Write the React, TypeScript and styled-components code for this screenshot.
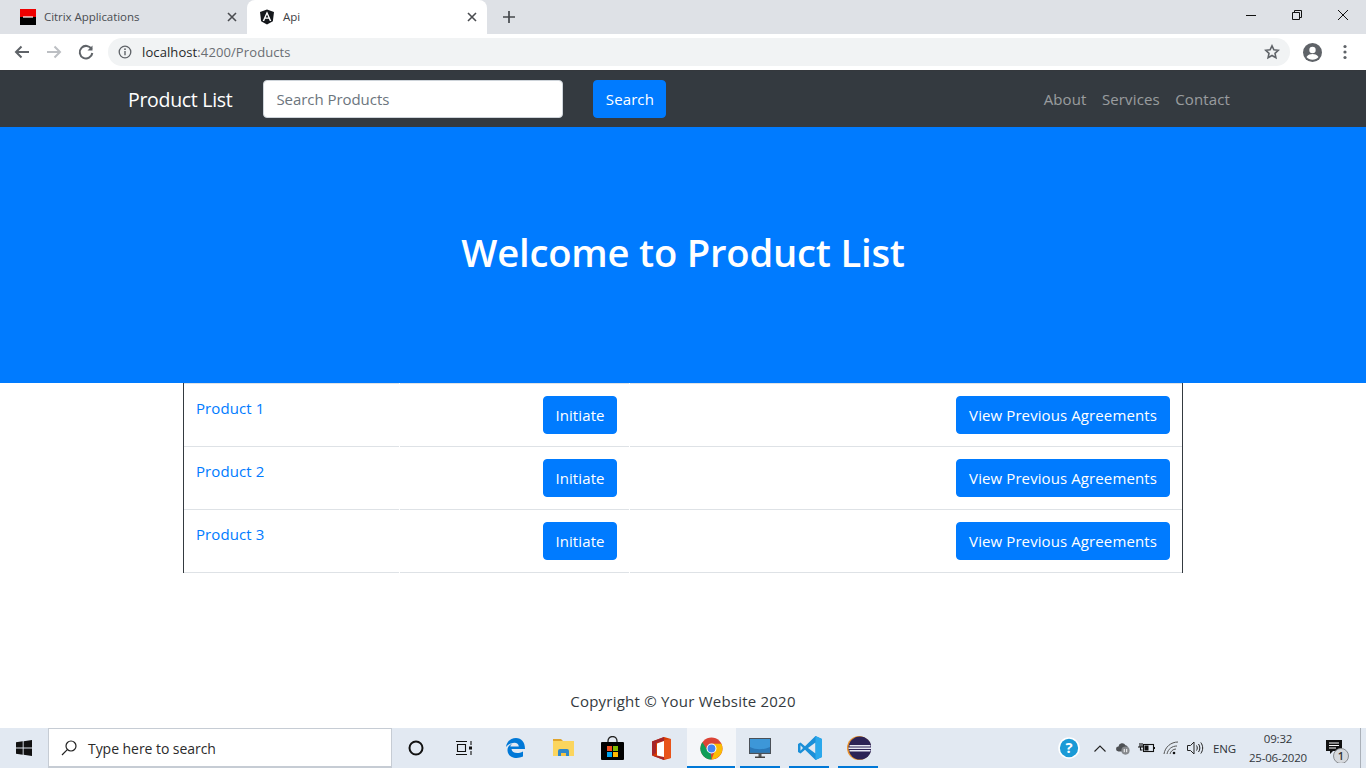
import React from "react";
import styled, { createGlobalStyle } from "styled-components";

const Global = createGlobalStyle`
  html, body { margin: 0; padding: 0; background: #fff; overflow: hidden; }
  body { font-family: "Open Sans", "Noto Sans", "Liberation Sans", sans-serif; }
  * { box-sizing: border-box; }
`;

const Page = styled.div`
  width: 1366px;
  height: 768px;
  display: flex;
  flex-direction: column;
  overflow: hidden;
`;

/* ---------- browser chrome ---------- */
const TabStrip = styled.div`
  height: 34px;
  background: #dee1e6;
  display: flex;
  align-items: stretch;
  flex: none;
`;
const Tab = styled.div<{ $active?: boolean; $width: number }>`
  position: relative;
  width: ${(p) => p.$width}px;
  display: flex;
  align-items: center;
  padding: 0 8px 1px ${(p) => (p.$active ? 12 : 20)}px;
  border-radius: 8px 8px 0 0;
  background: ${(p) => (p.$active ? "#fff" : "transparent")};
  font-size: 11.5px;
  letter-spacing: -0.05px;
  color: ${(p) => (p.$active ? "#3c4043" : "#4a4d52")};
`;
const TabTitle = styled.span`
  flex: 1;
  margin-left: 8px;
`;
const TabClose = styled.svg`
  width: 10px;
  height: 10px;
  margin-right: 2px;
  stroke: #4a4c50;
  stroke-width: 1.6;
  fill: none;
`;
const NewTab = styled.svg`
  width: 14px;
  height: 14px;
  margin: 10px 0 0 15px;
  stroke: #45484c;
  stroke-width: 1.7;
  fill: none;
`;
const WindowControls = styled.div`
  margin-left: auto;
  display: flex;
  height: 34px;
`;
const WinButton = styled.div`
  width: 46px;
  height: 34px;
  display: flex;
  align-items: center;
  justify-content: center;
  svg { stroke: #111; stroke-width: 1; fill: none; width: 12px; height: 12px; margin-bottom: 5px; }
`;
const Toolbar = styled.div`
  height: 37px;
  background: #fff;
  display: flex;
  align-items: center;
  border-bottom: 1px solid #34383d;
  flex: none;
`;
const NavIcon = styled.svg<{ $color?: string; $gap?: number }>`
  width: 18px;
  height: 18px;
  margin-left: ${(p) => p.$gap ?? 13}px;
  margin-right: 2px;
  fill: none;
  stroke: ${(p) => p.$color || "#5f6368"};
  stroke-width: 2;
  flex: none;
`;
const Omnibox = styled.div`
  margin-left: 11px;
  width: 1182px;
  height: 28px;
  border-radius: 14px;
  background: #f1f3f4;
  display: flex;
  align-items: center;
  padding: 0 10px;
  font-size: 13px;
  letter-spacing: 0.1px;
  color: #6a6e73;
  flex: none;
`;
const InfoIcon = styled.svg`
  width: 14px;
  height: 14px;
  margin-right: 10px;
  flex: none;
`;
const Host = styled.span`
  color: #26282b;
`;
const StarIcon = styled.svg`
  width: 16px;
  height: 16px;
  margin-left: auto;
  stroke: #5f6368;
  stroke-width: 1.6;
  fill: none;
`;
const Avatar = styled.svg`
  width: 19px;
  height: 19px;
  margin-left: 13px;
  flex: none;
`;
const Dots = styled.svg`
  width: 4px;
  height: 16px;
  margin-left: 21px;
  flex: none;
`;

/* ---------- site navbar ---------- */
const NavBar = styled.nav`
  height: 56px;
  background: #343a40;
  flex: none;
  display: flex;
  align-items: center;
  padding: 0 136px 0 128px;
`;
const Brand = styled.a`
  color: #fff;
  font-size: 19.5px;
  margin-right: 31px;
  white-space: nowrap;
  letter-spacing: -0.3px;
`;
const SearchInput = styled.div`
  width: 300px;
  height: 38px;
  background: #fff;
  border: 1px solid #ced4da;
  border-radius: 4px;
  padding: 0 12px;
  display: flex;
  align-items: center;
  color: #6c757d;
  font-size: 15px;
  letter-spacing: -0.05px;
`;
const PrimaryButton = styled.button<{ $width?: number }>`
  height: 38px;
  width: ${(p) => (p.$width ? `${p.$width}px` : "auto")};
  padding: 0;
  background: #007bff;
  border: 1px solid #007bff;
  border-radius: 4px;
  color: #fff;
  font-family: inherit;
  font-size: 15px;
  letter-spacing: 0.1px;
  flex: none;
`;
const SearchButton = styled(PrimaryButton)`
  margin-left: 30px;
`;
const NavLinks = styled.div`
  margin-left: auto;
  display: flex;
  gap: 15.5px;
`;
const NavLink = styled.a`
  color: rgba(255, 255, 255, 0.5);
  font-size: 15px;
  letter-spacing: 0.12px;
`;

/* ---------- hero ---------- */
const Hero = styled.header`
  height: 256px;
  background: #007bff;
  flex: none;
  display: flex;
  align-items: center;
  justify-content: center;
  padding-bottom: 6px;
`;
const HeroTitle = styled.h1`
  margin: 0;
  color: #fff;
  font-size: 38.2px;
  font-weight: 600;
  letter-spacing: -0.2px;
`;

/* ---------- product table ---------- */
const Table = styled.div`
  width: 1000px;
  margin: 0 0 0 183px;
  border-left: 1px solid #343a40;
  border-right: 1px solid #343a40;
  flex: none;
`;
const Row = styled.div`
  height: 63px;
  display: grid;
  grid-template-columns: 215px 229px 1fr;
  column-gap: 1px;
  &:first-child { height: 64px; }
  &:first-child > * { border-top: 1px solid #dee2e6; }
`;
const Cell = styled.div<{ $align?: string }>`
  border-bottom: 1px solid #dee2e6;
  padding: 12px;
  display: flex;
  justify-content: ${(p) => p.$align || "flex-start"};
  align-items: flex-start;
`;
const ProductLink = styled.a`
  color: #007bff;
  font-size: 15px;
  letter-spacing: 0.1px;
  line-height: 24px;
`;
const InitiateCell = styled(Cell)`
  padding-left: 143px;
`;

/* ---------- footer ---------- */
const Footer = styled.footer`
  flex: 1;
  display: flex;
  align-items: flex-end;
  justify-content: center;
  padding-bottom: 17px;
  font-size: 15px;
  letter-spacing: 0.22px;
  color: #343a40;
`;

/* ---------- taskbar ---------- */
const Taskbar = styled.div`
  height: 40px;
  background: #e2e9f2;
  flex: none;
  display: flex;
  align-items: stretch;
`;
const StartButton = styled.div`
  width: 48px;
  display: flex;
  align-items: center;
  justify-content: center;
`;
const TaskSearch = styled.div`
  width: 344px;
  height: 40px;
  background: #fff;
  border: 1px solid #c6ccd4;
  border-bottom-width: 2px;
  display: flex;
  align-items: center;
  padding: 1px 0 0 11px;
  font-size: 14px;
  letter-spacing: -0.05px;
  color: #2b2b2b;
  flex: none;
  svg { margin-right: 10px; }
`;
const TaskItem = styled.div<{ $active?: boolean; $running?: boolean }>`
  position: relative;
  width: 49px;
  margin-left: ${(p) => (p.$active ? 1 : 0)}px;
  display: flex;
  align-items: center;
  justify-content: center;
  background: ${(p) => (p.$active ? "#f4f6f9" : "transparent")};
  ${(p) =>
    p.$running
      ? `&::after { content: ""; position: absolute; bottom: 0; height: 2px; left: ${p.$active ? 0 : 4}px; right: ${p.$active ? 1 : 5}px; background: #0078d7; }`
      : ""}
`;
const CortanaIcon = styled.svg`
  margin-right: 2px;
`;
const TaskViewIcon = styled.svg`
  margin-right: 3px;
`;
const Tray = styled.div`
  margin-left: auto;
  display: flex;
  align-items: center;
  color: #2f3338;
`;
const TraySlot = styled.div<{ $width: number }>`
  width: ${(p) => p.$width}px;
  display: flex;
  align-items: center;
  justify-content: center;
  flex: none;
`;
const Lang = styled(TraySlot)`
  font-size: 11.5px;
  letter-spacing: -0.2px;
`;
const Clock = styled(TraySlot)`
  flex-direction: column;
  font-size: 11.5px;
  letter-spacing: -0.2px;
  line-height: 19px;
  color: #33373c;
`;
const ShowDesktop = styled.div`
  width: 6px;
  height: 40px;
  border-left: 1px solid #aab0b8;
  flex: none;
`;

const CloseGlyph = () => (
  <TabClose viewBox="0 0 10 10"><path d="M1 1l8 8M9 1l-8 8" /></TabClose>
);

const products = ["Product 1", "Product 2", "Product 3"];

export default function App() {
  return (
    <Page>
      <Global />
      <TabStrip>
        <Tab $width={247}>
          <svg width="16" height="16" viewBox="0 0 16 16">
            <rect width="16" height="8" y="0" fill="#ee0000" />
            <rect width="16" height="8" y="8" fill="#000" />
            <rect x="3" y="7.400" width="10" height="1.200" fill="#fff" />
          </svg>
          <TabTitle>Citrix Applications</TabTitle>
          <CloseGlyph />
        </Tab>
        <Tab $active $width={240}>
          <svg width="16" height="16" viewBox="0 0 250 250">
            <path d="M125 8 16 47l17 144 92 51 92-51 17-144z" fill="#15181c" />
            <path d="M125 35 57 187h25l14-34h58l14 34h25zm20 97h-40l20-47z" fill="#fff" />
          </svg>
          <TabTitle>Api</TabTitle>
          <CloseGlyph />
        </Tab>
        <NewTab viewBox="0 0 14 14"><path d="M7 1v12M1 7h12" /></NewTab>
        <WindowControls>
          <WinButton>
            <svg viewBox="0 0 12 12"><path d="M1 6.500h10" /></svg>
          </WinButton>
          <WinButton>
            <svg viewBox="0 0 12 12"><path d="M1.500 3.500h7v7h-7zM3.500 3.500v-2h7v7h-2" /></svg>
          </WinButton>
          <WinButton>
            <svg viewBox="0 0 12 12"><path d="M1 1l10 10M11 1L1 11" /></svg>
          </WinButton>
        </WindowControls>
      </TabStrip>

      <Toolbar>
        <NavIcon viewBox="0 0 18 18"><path d="M16 9H3M8.500 3.500 3 9l5.500 5.500" /></NavIcon>
        <NavIcon $color="#bcbfc3" $gap={12} viewBox="0 0 18 18"><path d="M2 9h13M9.500 3.500 15 9l-5.500 5.500" /></NavIcon>
        <NavIcon $gap={12} viewBox="0 0 18 18">
          <path d="M14.600 6.200A6.300 6.300 0 1 0 15.300 10" />
          <path d="M15.500 2.500v5h-5" fill="#5f6368" stroke="none" />
        </NavIcon>
        <Omnibox>
          <InfoIcon viewBox="0 0 14 14">
            <circle cx="7" cy="7" r="5.800" fill="none" stroke="#5f6368" strokeWidth="1.300" />
            <path d="M7 6v4.200" stroke="#5f6368" strokeWidth="1.400" />
            <circle cx="7" cy="4.200" r=".9" fill="#5f6368" />
          </InfoIcon>
          <Host>localhost</Host>:4200/Products
          <StarIcon viewBox="0 0 16 16">
            <path d="M8 1.800l1.900 4 4.400.5-3.300 3 .9 4.400L8 11.500l-3.900 2.200.9-4.400-3.300-3 4.400-.5z" />
          </StarIcon>
        </Omnibox>
        <Avatar viewBox="0 0 19 19">
          <circle cx="9.500" cy="9.500" r="9.500" fill="#5f6368" />
          <circle cx="9.500" cy="7" r="3.200" fill="#fff" />
          <path d="M3.500 14c1.500-2.400 4-3 6-3s4.500.6 6 3c-1.500 1.800-3.600 2.800-6 2.800s-4.500-1-6-2.800z" fill="#fff" />
        </Avatar>
        <Dots viewBox="0 0 4 16">
          <circle cx="2" cy="2.500" r="1.600" fill="#5f6368" />
          <circle cx="2" cy="8" r="1.600" fill="#5f6368" />
          <circle cx="2" cy="13.500" r="1.600" fill="#5f6368" />
        </Dots>
      </Toolbar>

      <NavBar>
        <Brand>Product List</Brand>
        <SearchInput>Search Products</SearchInput>
        <SearchButton $width={73}>Search</SearchButton>
        <NavLinks>
          <NavLink>About</NavLink>
          <NavLink>Services</NavLink>
          <NavLink>Contact</NavLink>
        </NavLinks>
      </NavBar>

      <Hero>
        <HeroTitle>Welcome to Product List</HeroTitle>
      </Hero>

      <Table>
        {products.map((name) => (
          <Row key={name}>
            <Cell><ProductLink>{name}</ProductLink></Cell>
            <InitiateCell><PrimaryButton $width={74}>Initiate</PrimaryButton></InitiateCell>
            <Cell $align="flex-end"><PrimaryButton $width={214}>View Previous Agreements</PrimaryButton></Cell>
          </Row>
        ))}
      </Table>

      <Footer>Copyright © Your Website 2020</Footer>

      <Taskbar>
        <StartButton>
          <svg width="16" height="16" viewBox="0 0 16 16" fill="#111">
            <path d="M0 2.300 6.700 1.300v6.300H0zM7.600 1.200 16 0v7.600H7.600zM0 8.400h6.700v6.300L0 13.700zM7.600 8.400H16V16l-8.400-1.200z" />
          </svg>
        </StartButton>
        <TaskSearch>
          <svg width="18" height="18" viewBox="0 0 18 18" fill="none" stroke="#222" strokeWidth="1.200">
            <circle cx="11" cy="7" r="5" />
            <path d="M7.300 10.700 2 16" />
          </svg>
          Type here to search
        </TaskSearch>
        <TaskItem>
          <CortanaIcon width="16" height="16" viewBox="0 0 16 16"><circle cx="8" cy="8" r="6.500" fill="none" stroke="#111" strokeWidth="2" /></CortanaIcon>
        </TaskItem>
        <TaskItem>
          <TaskViewIcon width="16" height="16" viewBox="0 0 16 16" fill="none" stroke="#111" strokeWidth="1.100">
            <path d="M0 1.500h11M0 14.500h11M1.500 4.500h8v7h-8zM15 1v4M15 11v4" />
            <rect x="13" y="6.500" width="3" height="3" fill="#111" stroke="none" />
          </TaskViewIcon>
        </TaskItem>
        <TaskItem>
          <svg width="22" height="22" viewBox="0 0 22 22">
            <path d="M2 10C3 4 7 1 12 1c5.500 0 9 4 9 11H7.500c.3 3.800 5.800 5.400 11.500 2.500v5c-6 2.800-15 1.700-15.500-6C3.300 10.500 5 8 8.500 6.200 7 7.500 6.500 8.500 6.300 9.500h8.500c0-5-7.800-5.300-12.800.5z" fill="#0078d7" />
          </svg>
        </TaskItem>
        <TaskItem>
          <svg width="22" height="20" viewBox="0 0 22 20">
            <path d="M0 1h8l2 2h-10z" fill="#e0a42c" />
            <rect y="3" width="21" height="15" fill="#fbd55e" />
            <path d="M5 18v-5a2 2 0 0 1 2-2h7a2 2 0 0 1 2 2v5h-3v-3H8v3z" fill="#2f88c9" />
            <rect x="8" y="15" width="5" height="3" fill="#f6c445" />
          </svg>
        </TaskItem>
        <TaskItem>
          <svg width="23" height="24" viewBox="0 0 23 24">
            <path d="M7 7V5a4.500 4.500 0 0 1 9 0v2" fill="none" stroke="#222" strokeWidth="1.300" />
            <rect y="6" width="23" height="18" rx="1" fill="#000" />
            <rect x="6" y="10" width="5" height="5" fill="#f25022" />
            <rect x="12" y="10" width="5" height="5" fill="#7fba00" />
            <rect x="6" y="16" width="5" height="5" fill="#00a4ef" />
            <rect x="12" y="16" width="5" height="5" fill="#ffb900" />
          </svg>
        </TaskItem>
        <TaskItem>
          <svg width="19" height="23" viewBox="0 0 19 23">
            <path d="M0 4.500 12 0l7 2v19l-7 2-12-4.500z" fill="#d83b01" />
            <path d="M12 0v23L0 18.500 12 20V4L4 6v10l-4 2.500v-14z" fill="#a4262c" />
            <path d="M5 6.500 12 4v16l-7-1.500z" fill="#fff" />
            <path d="M12 3l7-1v19l-7 1z" fill="#e8541a" />
          </svg>
        </TaskItem>
        <TaskItem $active $running>
          <svg width="23" height="23" viewBox="0 0 24 24">
            <circle cx="12" cy="12" r="11.500" fill="#db4437" />
            <path d="M12 23.500A11.500 11.500 0 0 0 22.300 7H12l-1.500 3 5 4.500z" fill="#fbbc05" />
            <path d="M12 23.500A11.500 11.500 0 0 1 2.400 5.600L8 14l3 2z" fill="#0f9d58" />
            <circle cx="12" cy="12" r="5.200" fill="#fff" />
            <circle cx="12" cy="12" r="4.100" fill="#4285f4" />
          </svg>
        </TaskItem>
        <TaskItem $running>
          <svg width="23" height="21" viewBox="0 0 23 21">
            <rect width="22" height="16" fill="#4a5058" />
            <rect x="1" y="1" width="20" height="13.500" fill="#3d97d8" />
            <path d="M1 9c6 3 13 3 20 0v5.500H1z" fill="#2b78b8" />
            <rect x="9.500" y="16" width="3" height="3" fill="#555" />
            <rect x="6" y="18.500" width="10" height="1.500" fill="#444" />
          </svg>
        </TaskItem>
        <TaskItem $running>
          <svg width="24" height="24" viewBox="0 0 24 24">
            <path d="M17.500 0 24 3v18l-6.500 3L7 13.800 2.500 17.400 0 16V8l2.500-1.400L7 10.200z" fill="#1a8fd8" />
            <path d="M17.500 6.500 10 12l7.500 5.500z" fill="#e2e9f2" />
            <path d="M17.500 0 24 3v18l-6.500 3z" fill="#2aa8ec" />
            <path d="M2.500 9.300 5 12l-2.500 2.700z" fill="#e2e9f2" />
          </svg>
        </TaskItem>
        <TaskItem $running>
          <svg width="24" height="24" viewBox="0 0 24 24">
            <circle cx="12" cy="12" r="12" fill="#e8912c" />
            <circle cx="13" cy="12" r="11.500" fill="#2c2255" />
            <path d="M2.500 9h21v1.400h-21zM1.500 11.500h23v1.400h-23zM2.500 14h21v1.400h-21z" fill="#e6e6f2" />
          </svg>
        </TaskItem>

        <Tray>
          <TraySlot $width={30}>
            <svg width="22" height="22" viewBox="0 0 20 20">
              <circle cx="10" cy="10" r="9.800" fill="#fff" />
              <circle cx="10" cy="10" r="8.300" fill="#1b9ad6" />
              <text x="10" y="14.800" fontSize="13.500" fontWeight="700" fill="#fff" textAnchor="middle" fontFamily="Open Sans">?</text>
            </svg>
          </TraySlot>
          <TraySlot $width={32}>
            <svg width="12" height="7" viewBox="0 0 12 7" fill="none" stroke="#222" strokeWidth="1.100"><path d="M.5 6.500 6 1l5.500 5.500" /></svg>
          </TraySlot>
          <TraySlot $width={14}>
            <svg width="17" height="15" viewBox="0 0 17 15">
              <path d="M3 11a3 3 0 0 1 0-6 4.500 4.500 0 0 1 8.500-1.500A3.500 3.500 0 0 1 14 9v2z" fill="#4d5054" />
              <circle cx="11.500" cy="10" r="5" fill="#85888c" />
              <path d="M10 8v4M13 8v4" stroke="#fff" strokeWidth="1.200" />
            </svg>
          </TraySlot>
          <TraySlot $width={33}>
            <svg width="17" height="12" viewBox="0 0 17 12" fill="none" stroke="#111" strokeWidth="1.100">
              <rect x="5.500" y="2.500" width="10" height="7" />
              <rect x="6.500" y="3.500" width="4" height="5" fill="#111" stroke="none" />
              <path d="M16.500 5v2M0 5h5M2 1v4M4 1v4M2.500 5v3h2" />
            </svg>
          </TraySlot>
          <TraySlot $width={16}>
            <svg width="16" height="14" viewBox="0 0 16 14" fill="none" stroke="#555" strokeWidth="1">
              <path d="M1 13C2 6 8 1 15 1M4 13c1-5 5-8 10-8M7 13c.5-2.500 3-5 6-5" />
              <circle cx="11" cy="12" r="1.300" fill="#111" stroke="none" />
            </svg>
          </TraySlot>
          <TraySlot $width={32}>
            <svg width="17" height="14" viewBox="0 0 17 14" fill="none" stroke="#222" strokeWidth="1">
              <path d="M.5 4.500h3L7 1v12L3.500 9.500h-3zM9.500 4.500c1 1.500 1 3.500 0 5M11.500 3c1.800 2.500 1.800 5.500 0 8M13.800 1.500c2.500 3.500 2.500 7.500 0 11" />
            </svg>
          </TraySlot>
          <Lang $width={27}>ENG</Lang>
          <Clock $width={80}>
            <span>09:32</span>
            <span>25-06-2020</span>
          </Clock>
          <TraySlot $width={42}>
            <svg width="26" height="30" viewBox="0 0 26 30">
              <path d="M0 7h16v11H7l-3 3v-3H0z" fill="#111" />
              <path d="M3 10h10M3 12.500h10M3 15h7" stroke="#fff" strokeWidth="1" />
              <circle cx="15" cy="23" r="7.500" fill="#d6d9dd" stroke="#8a8d91" strokeWidth="1" />
              <text x="15" y="27" fontSize="11" fontWeight="600" fill="#333" textAnchor="middle" fontFamily="Open Sans">1</text>
            </svg>
          </TraySlot>
          <ShowDesktop />
        </Tray>
      </Taskbar>
    </Page>
  );
}
